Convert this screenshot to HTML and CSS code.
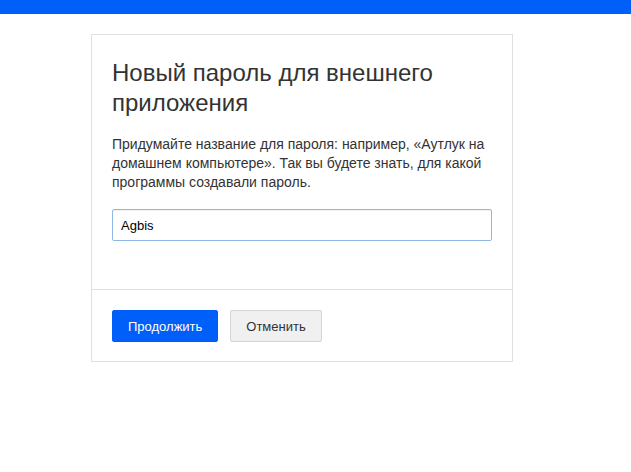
FILE: index.html
```html
<!DOCTYPE html>
<html lang="ru">
<head>
    <meta charset="UTF-8">
    <title>Новый пароль для внешнего приложения</title>
    <meta name="viewport" content="width=device-width, initial-scale=1.0">
    <link rel="stylesheet" href="styles.css">
</head>
<body>
    <div class="topbar"></div>
    <div class="card">
        <div class="card-body">
            <h2 class="title">Новый пароль для внешнего приложения</h2>
            <p class="hint">Придумайте название для пароля: например, «Аутлук на домашнем компьютере». Так вы будете знать, для какой программы создавали пароль.</p>
            <input type="text" class="name-input" value="Agbis" autofocus>
        </div>
        <div class="card-footer">
            <button class="btn btn-primary">Продолжить</button>
            <button class="btn btn-cancel">Отменить</button>
        </div>
    </div>
</body>
</html>
```

FILE: styles.css
```css
body {
    margin: 0;
    font-family: "Liberation Sans", Arial, sans-serif;
    color: #333;
    background: #fff;
}
.topbar {
    height: 14px;
    background-color: #005ff9;
}
.card {
    width: 420px;
    margin: 20px 0 0 91px;
    border: 1px solid #e0e0e0;
    box-shadow: 0 1px 1px rgba(0, 0, 0, 0.04);
}
.card-body {
    padding: 23px 20px 48px;
    border-bottom: 1px solid #e0e0e0;
}
.title {
    margin: 0;
    font-size: 24px;
    line-height: 30px;
    font-weight: normal;
    color: #333;
}
.hint {
    margin: 17px 0 0;
    font-size: 14px;
    line-height: 19px;
}
.name-input {
    display: block;
    box-sizing: border-box;
    width: 380px;
    height: 32px;
    margin-top: 17px;
    padding: 0 8px;
    border: 1px solid #8fb8e6;
    border-radius: 2px;
    box-shadow: inset 0 1px 1px rgba(0, 0, 0, 0.06);
    font-family: "Liberation Sans", Arial, sans-serif;
    font-size: 13px;
    color: #000;
    outline: none;
}
.card-footer {
    display: flex;
    gap: 12px;
    padding: 20px 20px 19px;
}
.btn {
    height: 32px;
    padding: 0 15px;
    border-radius: 2px;
    font-family: "Liberation Sans", Arial, sans-serif;
    font-size: 13px;
    cursor: pointer;
}
.btn-primary {
    width: 106px;
    background-color: #005ff9;
    border: 1px solid #005ff9;
    color: #fff;
}
.btn-cancel {
    width: 92px;
    background-color: #f0f0f0;
    border: 1px solid #d5d5d5;
    color: #333;
}
```
